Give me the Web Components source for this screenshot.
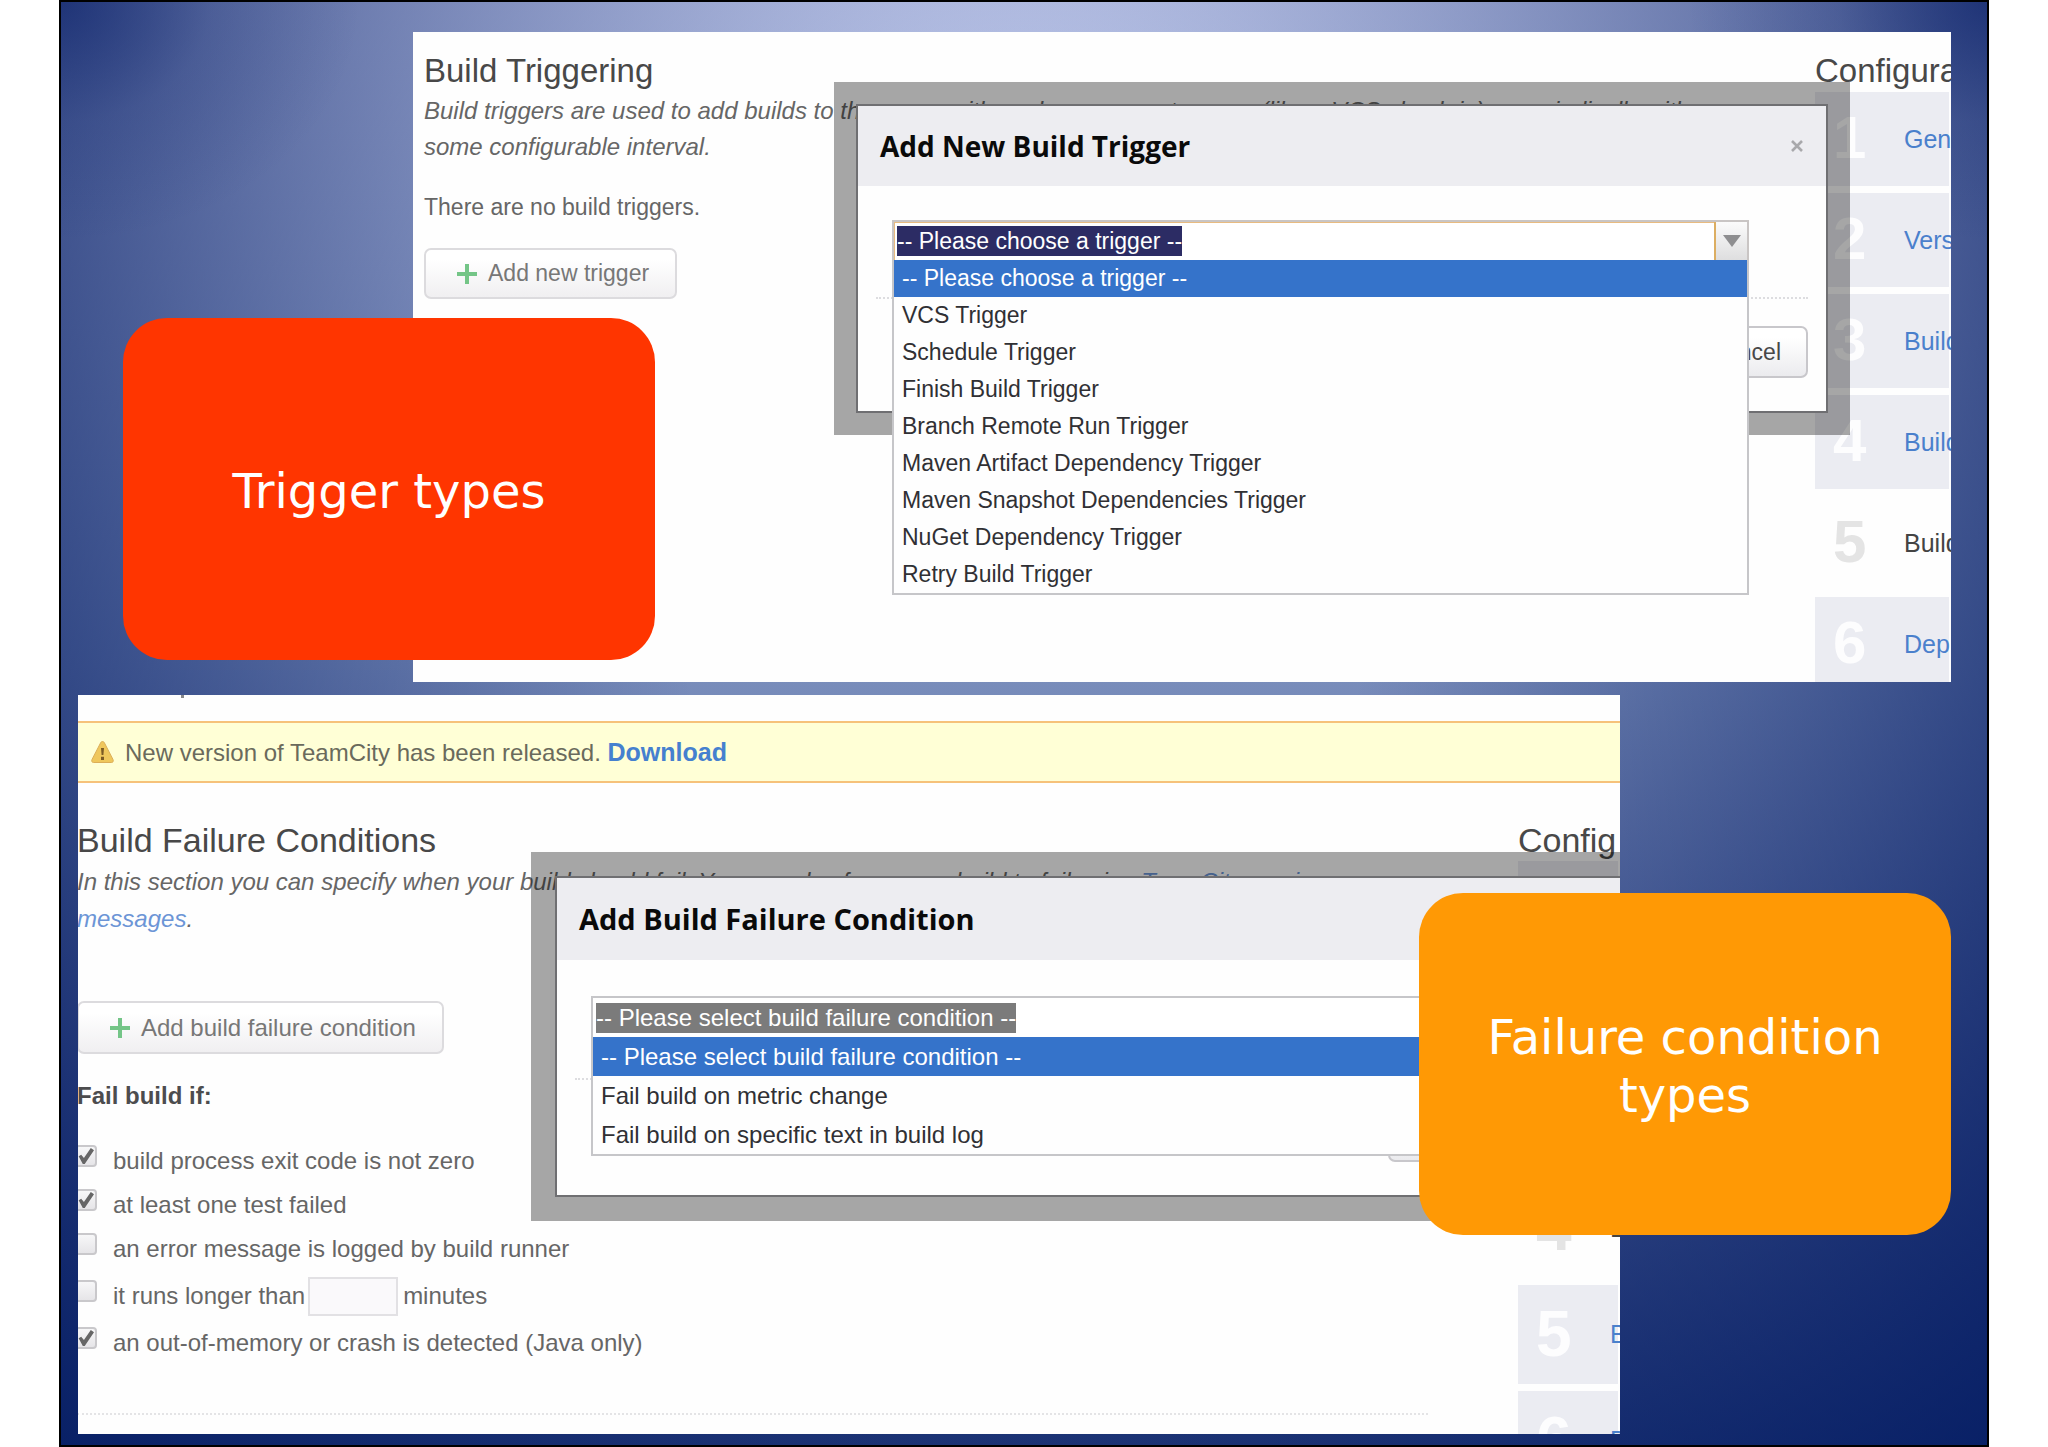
<!DOCTYPE html>
<html lang="en">
<head>
<meta charset="utf-8">
<title>Build triggers and failure conditions</title>
<style>
  body { margin: 0; background: #fff; font-family: "Liberation Sans", Arial, sans-serif; }
</style>
</head>
<body>
<tc-slide>
  <tc-screen class="triggers">
    <tc-section slot="main" heading="Build Triggering">
      <p slot="note">Build triggers are used to add builds to the queue either when an event occurs (like a VCS check-in) or periodically with some configurable interval.</p>
      <p slot="body">There are no build triggers.</p>
      <tc-add-button slot="body">Add new trigger</tc-add-button>
    </tc-section>
    <tc-steps slot="side" current="5" heading="Configura" steps="Gen|Vers|Build|Build|Build|Dep"></tc-steps>
    <tc-dialog slot="dialog" heading="Add New Build Trigger" closable>
      <tc-combo active value="-- Please choose a trigger --" label="Trigger"
        options="-- Please choose a trigger --|VCS Trigger|Schedule Trigger|Finish Build Trigger|Branch Remote Run Trigger|Maven Artifact Dependency Trigger|Maven Snapshot Dependencies Trigger|NuGet Dependency Trigger|Retry Build Trigger"></tc-combo>
    </tc-dialog>
  </tc-screen>

  <tc-screen class="failures">
    <tc-banner slot="top">New version of TeamCity has been released. <a href="#download">Download</a></tc-banner>
    <tc-section slot="main" heading="Build Failure Conditions">
      <p slot="note">In this section you can specify when your build should fail. You can also force your build to fail using <a href="#messages">TeamCity service</a> <a href="#messages">messages</a>.</p>
      <tc-add-button slot="body">Add build failure condition</tc-add-button>
      <tc-conditions slot="body"></tc-conditions>
    </tc-section>
    <tc-steps slot="side" current="4" heading="Config" steps="G|V|B|B|B|D"></tc-steps>
    <tc-dialog slot="dialog" heading="Add Build Failure Condition">
      <tc-combo value="-- Please select build failure condition --" label="Failure condition"
        options="-- Please select build failure condition --|Fail build on metric change|Fail build on specific text in build log"></tc-combo>
    </tc-dialog>
  </tc-screen>

  <tc-callout class="red">Trigger types</tc-callout>
  <tc-callout class="orange">Failure condition types</tc-callout>
</tc-slide>

<script>
function define(name, render, after) {
  customElements.define(name, class extends HTMLElement {
    constructor() { super(); this.attachShadow({ mode: 'open' }); }
    connectedCallback() {
      this.shadowRoot.innerHTML = render(this);
      if (after) after(this);
    }
  });
}

/* Slide: dark frame, blue backdrop, two screens and two callouts */
define('tc-slide', () => `
<style>
  :host {
    display: block; position: relative; box-sizing: border-box;
    min-height: 100vh; margin: 0 59px; padding: 30px 36px 11px 17px;
    border: 2px solid #000; overflow: hidden;
    background:
      radial-gradient(ellipse 300px 240px at 0 0, rgba(10,32,104,.6), rgba(10,32,104,.15) 50%, rgba(10,32,104,0)),
      radial-gradient(ellipse 300px 240px at 100% 0, rgba(10,32,104,.6), rgba(10,32,104,.15) 50%, rgba(10,32,104,0)),
      radial-gradient(ellipse 60% 110% at 50% 38%, rgba(0,24,96,0) 30%, rgba(0,24,96,.76) 100%),
      linear-gradient(#b8c2e6 0%, #7a8ebc 46%, #4f629a 75%, #263d7c 100%);
  }
  ::slotted(.triggers) {
    --size: 23px; --note: 24px; --title: 33px; --line: 36px; --row: 37px;
    --step: 94px; --digit: 60px; --digit-line: 91px; --side: 136px; --lead: 18px; --label: 71px;
    --pad-top: 18px; --pad-left: 12px; --pad-right: 110px; --title-gap: 1px; --note-gap: 24px; --body-gap: 23px; --btn: 51px;
    --dlg-left: 421px; --dlg-top: 50px; --dlg-right: 101px; --halo: 22px; --head: 80px; --dlg-title: 28px;
    --field: 40px; --dlg-gap: 34px; --dlg-btn: 52px; --dlg-foot: 37px;
    margin-left: 335px; height: 650px;
  }
  ::slotted(.failures) {
    --size: 24px; --note: 24px; --title: 34px; --line: 37px; --row: 39px;
    --step: 99px; --digit: 64px; --digit-line: 98px; --side: 102px; --lead: 18px; --label: 74px;
    --pad-top: 36px; --pad-left: 0px; --pad-right: 90px; --title-gap: 2px; --note-gap: 64px; --body-gap: 24px; --btn: 53px;
    --dlg-left: 453px; --dlg-top: 157px; --dlg-right: -40px; --halo: 24px; --head: 82px; --dlg-title: 29px;
    --field: 41px; --dlg-gap: 36px; --dlg-btn: 55px; --dlg-foot: 41px;
    margin: 13px 331px 0 0; height: 739px;
  }
  ::slotted(.red) { left: 62px; top: 316px; background: #ff3500; }
  ::slotted(.orange) { right: 36px; top: 891px; background: #ff9905; }
</style><slot></slot>`);

define('tc-screen', () => `
<style>
  :host { display: flex; flex-direction: column; position: relative; overflow: hidden; background: #fefefe; color: #666; font-size: var(--size); }
  .cols { display: grid; grid-template-columns: minmax(0, 1fr) var(--side); padding-top: var(--pad-top); }
</style>
<slot name="top"></slot>
<div class="cols"><slot name="main"></slot><slot name="side"></slot></div>
<slot name="dialog"></slot>`);

define('tc-section', el => `
<style>
  :host { display: block; margin-left: -1px; padding: 0 var(--pad-right) 0 var(--pad-left); }
  h2 { margin: 0 0 var(--title-gap); font-weight: 400; font-size: var(--title); line-height: 42px; color: #484848; }
  ::slotted(p) { margin: 0; line-height: var(--line); }
  ::slotted(p[slot=note]) { font-style: italic; font-size: var(--note); }
  .body { display: flex; flex-direction: column; align-items: stretch; gap: var(--body-gap); margin-top: var(--note-gap); }
</style>
<h2>${el.getAttribute('heading')}</h2>
<slot name="note"></slot>
<div class="body"><slot name="body"></slot></div>`,
  el => el.querySelectorAll('p a').forEach(a => { a.style.color = '#6c95d6'; a.style.textDecoration = 'none'; }));

define('tc-add-button', () => `
<style>
  :host { display: flex; }
  button {
    display: flex; align-items: center; gap: 11px; height: var(--btn); padding: 0 26px 0 31px;
    font: inherit; color: #777; border: 2px solid #dcdbde; border-radius: 7px;
    background: linear-gradient(#fff 20%, #f0eff1);
  }
  svg { width: 20px; height: 20px; }
</style>
<button type="button"><svg viewBox="0 0 20 20"><path d="M10 0v20M0 10h20" stroke="#74c587" stroke-width="4"/></svg><span><slot></slot></span></button>`);

define('tc-banner', () => `
<style>
  :host { display: block; }
  .cut { height: 26px; }
  .cut i { display: block; width: 3px; height: 3px; margin-left: 103px; background: #888; }
  .bar {
    display: flex; align-items: center; gap: 10px; height: 58px; padding-left: 12px; font-size: 24px; color: #6a6a5c;
    background: #ffffd6; border: solid #f6c27a; border-width: 2px 0;
  }
  svg { width: 25px; height: 24px; }
  ::slotted(a) { color: #4580cf; font-weight: 700; font-size: 25px; text-decoration: none; }
</style>
<div class="cut"><i></i></div>
<div class="bar">
  <svg viewBox="0 0 25 24"><path d="M12.500 1.500c1 0 1.600.6 2 1.500l8.500 16.500c.8 1.900 0 3-1.700 3H3.700C2 22.500 1.200 21.400 2 19.500L10.500 3c.4-.9 1-1.500 2-1.500z" fill="#efc75c" stroke="#dcae58"/><path d="M11 8h3l-.6 7h-1.800zM11 16.800h3V20h-3z" fill="#7b5a24"/></svg>
  <span><slot></slot></span>
</div>`);

define('tc-steps', el => {
  const cur = +el.getAttribute('current');
  return `
<style>
  :host { display: block; white-space: nowrap; overflow: hidden; }
  h2 { margin: 0; font-weight: 400; font-size: var(--title); line-height: 42px; color: #484848; }
  ol { list-style: none; margin: 0; padding: 0; display: flex; flex-direction: column; gap: 7px; }
  li { display: flex; height: var(--step); margin-right: 2px; padding-left: var(--lead); background: #ebecf2; }
  b { flex: 0 0 var(--label); font-size: var(--digit); line-height: var(--digit-line); color: #fdfdfe; }
  a { font-size: 25px; line-height: var(--step); color: #4a80cc; text-decoration: none; }
  li.on { background: none; } li.on b { color: #e4e4e4; } li.on a { color: #444; }
</style>
<h2>${el.getAttribute('heading')}</h2>
<ol>${el.getAttribute('steps').split('|').map((n, i) => `<li class="${i + 1 === cur ? 'on' : ''}"><b>${i + 1}</b><a href="#step${i + 1}">${n}</a></li>`).join('')}</ol>`;
});

define('tc-dialog', el => `
<style>
  :host {
    display: block; position: absolute; left: var(--dlg-left); top: var(--dlg-top); right: var(--dlg-right);
    padding: var(--halo); background: rgba(0,0,0,.345);
  }
  section { background: #fefefe; border: 2px solid #6f6f72; }
  header { display: flex; align-items: center; justify-content: space-between; height: var(--head); padding: 0 22px; background: #ededf1; }
  h3 { margin: 0; font: 700 var(--dlg-title)/38px "Open Sans", sans-serif; color: #0a0a0a; }
  .x { padding: 0; border: 0; background: none; display: flex; }
  .x svg { width: 14px; height: 14px; }
  .body { padding: var(--dlg-gap) 18px 33px; }
  .foot { display: flex; justify-content: flex-end; gap: 12px; margin-top: var(--dlg-foot); padding-top: 27px; border-top: 2px dotted #dddde0; }
  .foot button { height: var(--dlg-btn); padding: 0 25px; font: inherit; color: #484848; border: 2px solid #c8c7cb; border-radius: 7px; background: linear-gradient(#fff 20%, #ebebee); }
  .foot .wide { padding: 0 112px; }
</style>
<section role="dialog" aria-label="${el.getAttribute('heading')}">
  <header><h3>${el.getAttribute('heading')}</h3>${el.hasAttribute('closable') ? '<button class="x" type="button" aria-label="Close"><svg viewBox="0 0 14 14"><path d="M2 2l10 10M12 2L2 12" stroke="#a8a8ab" stroke-width="2.600"/></svg></button>' : ''}</header>
  <div class="body"><slot></slot>
    <div class="foot">${el.hasAttribute('closable') ? '<button type="button">Cancel</button>' : '<button class="wide" type="button" aria-label="Save"></button>'}</div>
  </div>
</section>`);

define('tc-combo', el => {
  const on = el.hasAttribute('active');
  return `
<style>
  :host { display: block; position: relative; margin: 0 59px 0 16px; }
  .box { display: flex; height: var(--field); box-sizing: border-box; border: 2px solid ${on ? '#c9c5c4' : '#c6c6c9'}; border-bottom: 0; background: #fff; }
  .field { flex: 1; display: flex; align-items: center; padding: 0 3px; ${on ? 'border-right: 2px solid #dcae62; box-shadow: inset 1px 1px #e8bb80;' : ''} }
  input { field-sizing: content; box-sizing: content-box; height: 30px; padding: 0; border: 0; font: inherit; color: #fff; background: ${on ? '#2c2c64' : '#7b7b7b'}; }
  .open { width: 31px; padding: 0; border: 0; display: grid; place-items: center; background: linear-gradient(#fbfbfb, #dededf); }
  svg { width: 18px; height: 12px; }
  ul { position: absolute; z-index: 1; left: 0; right: 0; top: var(--field); margin: 0; padding: 0; list-style: none; background: #fefefe; border: 2px solid #c6c6c9; border-top: 0; color: #303034; }
  li { padding-left: 8px; line-height: var(--row); }
  li:first-child { background: #3573ca; color: #fff; }
</style>
<div class="box"><div class="field"><input aria-label="${el.getAttribute('label')}" value="${el.getAttribute('value')}"></div>
<button class="open" type="button" aria-label="Open"><svg viewBox="0 0 18 12"><path d="M0 0h18L9 12z" fill="#8e8e90"/></svg></button></div>
<ul role="listbox">${el.getAttribute('options').split('|').map(o => `<li role="option">${o}</li>`).join('')}</ul>`;
});

define('tc-conditions', () => {
  const rows = [[1, 'build process exit code is not zero'], [1, 'at least one test failed'], [0, 'an error message is logged by build runner'], [0, 'it runs longer than'], [1, 'an out-of-memory or crash is detected (Java only)']];
  return `
<style>
  :host { display: block; }
  h4 { margin: 0 0 25px; font-size: 24px; line-height: 36px; color: #4c4c4e; }
  div { display: flex; align-items: center; height: 44px; }
  div.tall { height: 50px; }
  [type=checkbox] { appearance: none; flex: none; width: 22px; height: 22px; margin: 0 16px 10px -2px; border: 2px solid #c9c8cb; border-radius: 4px; background: linear-gradient(#f7f7f8, #e6e5e8); display: grid; place-items: center; }
  :checked::before { content: ""; width: 16px; height: 16px; background: #666; clip-path: polygon(4% 52%, 20% 42%, 37% 62%, 80% 0, 100% 14%, 42% 100%, 30% 100%); }
  [type=text] { box-sizing: border-box; width: 90px; height: 39px; margin: 0 5px 0 3px; border: 2px solid #e2e1e4; background: #faf9fb; }
  hr { margin: 48px 0 0; border: 0; border-top: 2px dotted #e4e4e6; }
</style>
<h4>Fail build if:</h4>
${rows.map(([c, t], i) => `<div class="${i === 3 ? 'tall' : ''}"><input type="checkbox" id="c${i}" ${c ? 'checked' : ''}><label for="c${i}">${t}</label>${i === 3 ? '<input type="text" id="min"><label for="min">minutes</label>' : ''}</div>`).join('')}
<hr>`;
});

define('tc-callout', () => `
<style>
  :host {
    position: absolute; z-index: 2; display: flex; align-items: center; justify-content: center; box-sizing: border-box;
    width: 532px; height: 342px; padding: 4px 48px 0; border-radius: 44px; text-align: center;
    font: 48px/58px "DejaVu Sans", Verdana, sans-serif; color: #fff;
  }
</style>
<span><slot></slot></span>`);
</script>
</body>
</html>
